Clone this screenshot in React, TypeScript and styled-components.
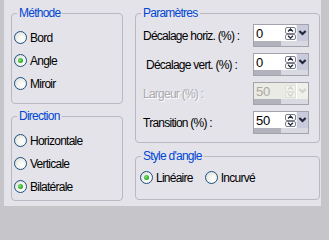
import React from 'react'
import styled, { createGlobalStyle } from 'styled-components'

const Global = createGlobalStyle`
  html, body {
    margin: 0;
    padding: 0;
    background: #c6c6ca;
  }
  * { box-sizing: border-box; }
`

const Frame = styled.div`
  width: 329px;
  height: 211px;
  background: #c6c6ca;
  padding-left: 4px;
  overflow: hidden;
  font-family: "Liberation Sans", Arial, sans-serif;
  font-size: 12px;
  letter-spacing: -0.75px;
  color: #000;
`

const Panel = styled.div`
  width: 317px;
  height: 206px;
  background: #e3e3e9;
  padding: 6px 0 0 7px;
  display: flex;
  gap: 12px;
`

const Column = styled.div<{ $w: number; $gap: number }>`
  width: ${p => p.$w}px;
  display: flex;
  flex-direction: column;
  gap: ${p => p.$gap}px;
`

const Group = styled.fieldset<{ $h: number }>`
  margin: 0;
  padding: 0;
  min-width: 0;
  height: ${p => p.$h}px;
  border: 1px solid #b9b9c1;
  border-radius: 4px;
`

const Title = styled.legend`
  margin-left: 5px;
  padding: 0 2px;
  color: #0046d5;
  font-size: 12px;
  line-height: 14px;
`

const RadioList = styled.div<{ $row?: boolean }>`
  display: flex;
  flex-direction: ${p => (p.$row ? 'row' : 'column')};
  padding: ${p => (p.$row ? '3px 0 0 4px' : '6px 0 0 2px')};
  gap: ${p => (p.$row ? '12px' : '0')};
`

const RadioRow = styled.label`
  display: flex;
  align-items: center;
  height: 23px;
  gap: 3px;
  white-space: nowrap;
`

const Dot = styled.span<{ $on?: boolean }>`
  position: relative;
  width: 13px;
  height: 13px;
  border-radius: 50%;
  border: 1px solid #1c5180;
  background: radial-gradient(circle at 65% 65%, #ffffff 0%, #f4f4f1 40%, #d6d6d0 100%);
  flex-shrink: 0;

  &::after {
    content: '';
    display: ${p => (p.$on ? 'block' : 'none')};
    position: absolute;
    left: 3px;
    top: 3px;
    width: 5px;
    height: 5px;
    border-radius: 50%;
    background: radial-gradient(circle at 40% 40%, #8be07a 0%, #2fb32a 55%, #1a8a1a 100%);
  }
`

const Fields = styled.div`
  display: flex;
  flex-direction: column;
  gap: 6px;
  padding: 4px 10px 0 7px;
`

const FieldRow = styled.div`
  display: flex;
  align-items: center;
  justify-content: space-between;
  height: 23px;
`

const FieldLabel = styled.span<{ $off?: boolean; $indent?: number }>`
  padding-left: ${p => p.$indent || 0}px;
  color: ${p => (p.$off ? '#aaa9b0' : '#000')};
  text-shadow: ${p => (p.$off ? '1px 1px 0 #ffffff' : 'none')};
  white-space: nowrap;
`

const Spin = styled.div<{ $off?: boolean }>`
  width: 56px;
  height: 23px;
  border: 1px solid #a3a3ae;
  display: flex;
  flex-direction: column;
  background: ${p => (p.$off ? '#ebebe6' : '#ffffff')};
`

const SpinTop = styled.div`
  flex: 1;
  display: flex;
`

const Value = styled.span<{ $off?: boolean }>`
  flex: 1;
  padding: 1px 0 0 2px;
  font-size: 13px;
  letter-spacing: -0.3px;
  color: ${p => (p.$off ? '#a9a9a0' : '#000')};
`

const Steps = styled.div`
  width: 11px;
  display: flex;
  flex-direction: column;
  padding: 2px 0 1px;
`

const Step = styled.div<{ $off?: boolean }>`
  flex: 1;
  display: flex;
  align-items: center;
  justify-content: center;
  border: 1px solid ${p => (p.$off ? '#e0e0da' : '#7e7e88')};
  border-radius: 2px;
  background: ${p => (p.$off ? '#f3f3ee' : '#ffffff')};
`

const Drop = styled.div<{ $off?: boolean }>`
  width: 12px;
  display: flex;
  align-items: center;
  justify-content: center;
  background: ${p => (p.$off ? '#f0f0ea' : '#c9cbdc')};
  border-left: 1px solid ${p => (p.$off ? '#ffffff' : '#eeeef4')};
`

const Bar = styled.div`
  height: 5px;
  background: linear-gradient(to right, #b2b2bc 0 27px, #d9d9e1 27px);
`

const Chevron = ({ dir, color, w }: { dir: 'up' | 'down'; color: string; w: number }) => (
  <svg width={w} height={w * 0.6} viewBox="0 0 10 6">
    <polyline
      points={dir === 'up' ? '1.5,5 5,1.5 8.5,5' : '1.5,1 5,4.5 8.5,1'}
      fill="none"
      stroke={color}
      strokeWidth={w > 8 ? 2.4 : 2}
    />
  </svg>
)

const SpinBox = ({ value, off }: { value: string; off?: boolean }) => {
  const ink = off ? '#d2d2cc' : '#222a3a'
  return (
    <Spin $off={off}>
      <SpinTop>
        <Value $off={off}>{value}</Value>
        <Steps>
          <Step $off={off}><Chevron dir="up" color={ink} w={7} /></Step>
          <Step $off={off}><Chevron dir="down" color={ink} w={7} /></Step>
        </Steps>
        <Drop $off={off}><Chevron dir="down" color={ink} w={9} /></Drop>
      </SpinTop>
      <Bar />
    </Spin>
  )
}

const Radio = ({ label, on }: { label: string; on?: boolean }) => (
  <RadioRow>
    <Dot $on={on} />
    {label}
  </RadioRow>
)

export default function App() {
  return (
    <>
      <Global />
      <Frame>
        <Panel>
          <Column $w={112} $gap={5}>
            <Group $h={98}>
              <Title>Méthode</Title>
              <RadioList>
                <Radio label="Bord" />
                <Radio label="Angle" on />
                <Radio label="Miroir" />
              </RadioList>
            </Group>
            <Group $h={92}>
              <Title>Direction</Title>
              <RadioList>
                <Radio label="Horizontale" />
                <Radio label="Verticale" />
                <Radio label="Bilatérale" on />
              </RadioList>
            </Group>
          </Column>
          <Column $w={185} $gap={6}>
            <Group $h={137}>
              <Title>Paramètres</Title>
              <Fields>
                <FieldRow>
                  <FieldLabel>Décalage horiz. (%) :</FieldLabel>
                  <SpinBox value="0" />
                </FieldRow>
                <FieldRow>
                  <FieldLabel $indent={3}>Décalage vert. (%) :</FieldLabel>
                  <SpinBox value="0" />
                </FieldRow>
                <FieldRow>
                  <FieldLabel $off>Largeur (%) :</FieldLabel>
                  <SpinBox value="50" off />
                </FieldRow>
                <FieldRow>
                  <FieldLabel>Transition (%) :</FieldLabel>
                  <SpinBox value="50" />
                </FieldRow>
              </Fields>
            </Group>
            <Group $h={51}>
              <Title>Style d'angle</Title>
              <RadioList $row>
                <Radio label="Linéaire" on />
                <Radio label="Incurvé" />
              </RadioList>
            </Group>
          </Column>
        </Panel>
      </Frame>
    </>
  )
}
